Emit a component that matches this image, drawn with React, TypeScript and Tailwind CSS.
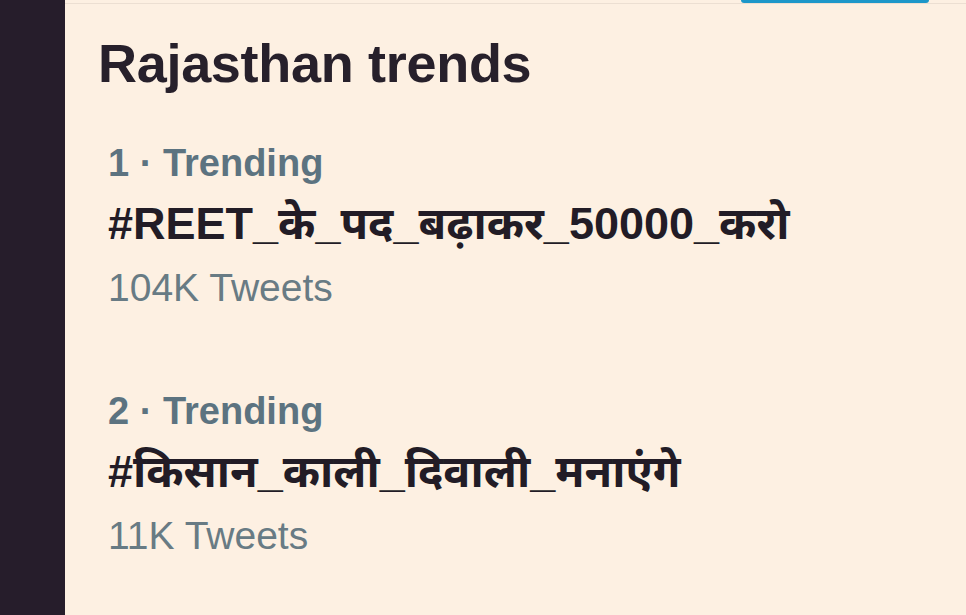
const trends = [
  { rank: 1, tag: "#REET_के_पद_बढ़ाकर_50000_करो", count: "104K Tweets" },
  { rank: 2, tag: "#किसान_काली_दिवाली_मनाएंगे", count: "11K Tweets" },
];

const font = {
  fontFamily:
    '"Liberation Sans", "Noto Sans Devanagari", "Noto Sans", Arial, sans-serif',
};

export default function App() {
  return (
    <div className="flex h-[615px] w-[966px] overflow-hidden bg-[#fdf0e2]" style={font}>
      <div className="w-[65px] shrink-0 bg-[#261d2b]" />
      <div className="flex min-w-0 flex-1 flex-col">
        <div className="flex h-[4px] justify-end border-b border-[#ecdfd2] pr-[37px]">
          <div className="h-[3px] w-[188px] rounded-b-md bg-[#1d97c9]" />
        </div>
        <h2 className="mt-[27px] h-[64px] pl-[33px] text-[54px] font-bold leading-[64px] tracking-[-0.3px] text-[#27202b]">
          Rajasthan trends
        </h2>
        <ul className="mt-[36px] flex flex-col gap-[60px] pl-[43px]">
          {trends.map((t) => (
            <li key={t.rank} className="flex flex-col">
              <div className="h-[64px] text-[38px] font-bold leading-[64px] text-[#5c7380]">
                {t.rank} · Trending
              </div>
              <div className="h-[62px] whitespace-nowrap text-[45px] font-bold leading-[58px] text-[#221c26]">
                {t.tag}
              </div>
              <div className="h-[62px] text-[39px] leading-[62px] text-[#687b84]">
                {t.count}
              </div>
            </li>
          ))}
        </ul>
      </div>
    </div>
  );
}
